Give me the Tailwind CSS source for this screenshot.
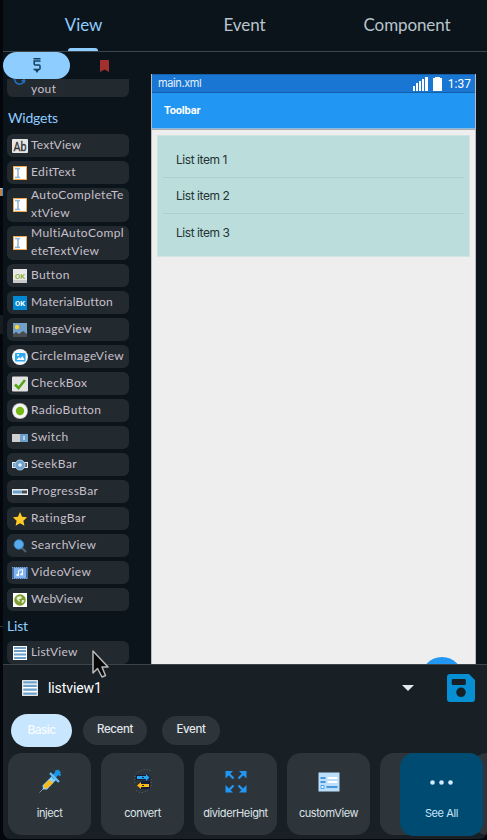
<!DOCTYPE html>
<html lang="en">
<head>
<meta charset="utf-8">
<title>View editor</title>
<script src="https://cdn.jsdelivr.net/npm/@tailwindcss/browser@4"></script>
</head>
<body class="bg-[#03070c] overflow-hidden">
<svg class="hidden">
  <defs>
    <symbol id="edit" viewBox="0 0 16 16"><path fill="#f7a94b" d="M1 1h14v14H1z"/><path fill="#fff" d="M2 2h12v12H2z"/><path fill="none" stroke="#8db4d3" stroke-width="1.500" d="M3 3.500h2l1 1 1-1h1M6 4v8M3 12.500h2l1-1 1 1h1"/></symbol>
    <symbol id="list" viewBox="0 0 16 16"><path fill="#fff" d="M1 1h14v14H1z"/><path fill="#6c9fca" d="M2 2h12v2H2zM2 5h12v2H2zM2 8.500h12v2H2zM2 12h12v2H2z"/></symbol>
  </defs>
</svg>
<main class="relative ml-[3px] w-[484px] h-[839px] flex flex-col bg-[#0c141b] rounded-b-lg overflow-hidden">
  <nav class="h-[52px] shrink-0 border-b border-[#3d464d] grid grid-cols-[161px_161px_162px] text-[17px] text-[#b9c4cd] font-['Lato',sans-serif] [&>div]:pb-[2px]">
    <div class="relative flex items-center justify-center text-[#8ecdff] tracking-[-0.1px]">View<span class="absolute bottom-0 left-[65px] w-[30px] h-[3px] rounded-t-[3px] bg-[#8ecdff]"></span></div>
    <div class="flex items-center justify-center tracking-[-0.1px]">Event</div>
    <div class="flex items-center justify-center tracking-[-0.1px] pl-[2px]">Component</div>
  </nav>
  <section class="h-[612px] shrink-0 flex">
    <aside class="w-[148px] shrink-0 flex flex-col text-[12px] leading-[18px] text-[#c8c0cc] font-['Lato',sans-serif] tracking-[0.4px]">
      <div class="h-[27px] shrink-0 flex">
        <div class="w-[67px] h-[27px] rounded-full bg-[#8ecdff] flex items-center justify-center">
          <svg class="w-[10px] h-[17px]" viewBox="0 0 10 17" fill="none" stroke="#12405e" stroke-width="1.500"><path d="M1.500 1.750h7M1.500 4h7M2.200 4v3q0 1 1 1H7q1 0 1 1v2.500q0 1-1 1H1.500"/><path fill="#12405e" stroke="none" d="M3 13h4l-2 3z"/></svg>
        </div>
        <div class="w-[68px] flex items-center justify-center"><svg class="w-[9px] h-3" viewBox="0 0 9 12"><path fill="#a2302e" d="M0 1q0-1 1-1h7q1 0 1 1v11L4.500 9.500 0 12z"/></svg></div>
      </div>
      <div class="ml-1 w-[122px] h-[18px] shrink-0 rounded-b-md bg-[#22292f] flex items-start pl-[5px] overflow-hidden">
        <svg class="w-[16px] h-[8px]" viewBox="0 0 16 8" fill="none" stroke="#2070c4" stroke-width="1.500"><path d="M2.500 0q1 5 5 5.200 3 0 4.500-2.500M9.500 1.800h4M12 0v4"/></svg>
        <span class="ml-[3px] mt-px">yout</span>
      </div>
      <h2 class="ml-[5px] h-[37px] shrink-0 pt-[12px] text-[14px] leading-[18px] text-[#8ecdff] tracking-[-0.2px]">Widgets</h2>
      <ul class="ml-1 w-[122px] flex flex-col gap-1 shrink-0 [&>li]:h-[23px] [&>li]:rounded-md [&>li]:bg-[#22292f] [&>li]:flex [&>li]:items-center [&>li]:pl-[5px] [&>li]:gap-[3px] [&_svg]:w-4 [&_svg]:h-4 [&_svg]:shrink-0 [&_span]:pb-[2px]">
        <li><svg viewBox="0 0 16 16"><rect y="1" width="16" height="14" rx="1" fill="#e6e6e6"/><text x="8" y="12.500" font-family="Roboto" font-size="12" fill="#333" stroke="#333" stroke-width=".3" text-anchor="middle" textLength="13" lengthAdjust="spacingAndGlyphs" letter-spacing="0">Ab</text></svg><span class="tracking-[0.2px]">TextView</span></li>
        <li><svg><use href="#edit"/></svg><span class="tracking-[0.4px]">EditText</span></li>
        <li class="h-[34px]!"><svg><use href="#edit"/></svg><span class="whitespace-nowrap">AutoCompleteTe<br>xtView</span></li>
        <li class="h-[34px]!"><svg><use href="#edit"/></svg><span class="whitespace-nowrap">MultiAutoCompl<br>eteTextView</span></li>
        <li><svg viewBox="0 0 16 16"><path fill="#e9e9e9" d="M1 1h14v14H1z"/><path fill="#c9c9c9" d="M1 12h14v3H1z"/><text x="8" y="11" font-family="Roboto" font-size="8" font-weight="500" fill="#8cab2c" text-anchor="middle" textLength="10" lengthAdjust="spacingAndGlyphs" letter-spacing="0">OK</text></svg><span>Button</span></li>
        <li><svg viewBox="0 0 16 16"><path fill="#0288d1" d="M1 1h14v14H1z"/><text x="8" y="11" font-family="Roboto" font-size="7.500" font-weight="700" fill="#fff" text-anchor="middle" textLength="10" lengthAdjust="spacingAndGlyphs" letter-spacing="0">OK</text></svg><span class="tracking-[0.15px]">MaterialButton</span></li>
        <li><svg viewBox="0 0 16 16"><path fill="#72a0c8" d="M1 1h14v14H1z"/><circle cx="5" cy="5" r="2.200" fill="#fbd72b"/><path fill="#4a4d50" d="M1 12l3-2 3 2 4-3 4 3v3H1z"/></svg><span>ImageView</span></li>
        <li><svg viewBox="0 0 16 16"><circle cx="8" cy="8" r="8" fill="#f1f5f7"/><rect x="3" y="4" width="10.500" height="8.500" rx="1" fill="#2fa8ef"/><path fill="#fff" d="M4.500 11l2.500-3 1.500 1.500L10.500 7l2 4z"/><circle cx="6" cy="6" r="1" fill="#fff"/></svg><span>CircleImageView</span></li>
        <li><svg viewBox="0 0 16 16"><rect y=".5" width="16" height="15" rx="1" fill="#e4e4e4"/><path fill="none" stroke="#55a51c" stroke-width="2.600" d="M3 8.500l3.500 3.500L13 4"/></svg><span>CheckBox</span></li>
        <li><svg viewBox="0 0 16 16"><circle cx="8" cy="8" r="8" fill="#a9aba8"/><circle cx="8" cy="8" r="7.300" fill="#f6f6f6"/><circle cx="8" cy="8" r="4.200" fill="#76b815"/></svg><span>RadioButton</span></li>
        <li><svg viewBox="0 0 16 16"><path fill="#cfcfcf" d="M0 4h8v8H0z"/><path fill="#6c9fca" d="M8 4h8v8H8z"/><path fill="#b3d2ea" d="M11 6h2v4h-2z"/></svg><span>Switch</span></li>
        <li><svg viewBox="0 0 16 16"><path fill="#e8edf0" d="M0 5h16v6H0z"/><path fill="#6c9fca" d="M1 6h4v4H1z"/><path fill="#555" d="M12 6h3v4h-3z"/><circle cx="8" cy="8" r="5" fill="#6c9fca" stroke="#a9cbe4"/><circle cx="8" cy="8" r="1.800" fill="#e8f2fa"/></svg><span>SeekBar</span></li>
        <li><svg viewBox="0 0 16 16"><path fill="#e8edf0" d="M0 5h16v6H0z"/><path fill="#6c9fca" d="M1 6.500h9v3H1z"/><path fill="#4a4a4a" d="M10 6.500h5v3h-5z"/></svg><span>ProgressBar</span></li>
        <li><svg viewBox="0 0 16 16"><path fill="#ffc928" d="M8 1l2.100 4.700 5 .6-3.700 3.400 1 5L8 12.200l-4.400 2.500 1-5L.9 6.300l5-.6z"/></svg><span>RatingBar</span></li>
        <li><svg viewBox="0 0 16 16"><path stroke="#52616b" stroke-width="2" d="M9.500 9.500l4.500 4.500"/><circle cx="6.800" cy="6.500" r="4.700" fill="#58acee" stroke="#3b89c8"/></svg><span>SearchView</span></li>
        <li><svg viewBox="0 0 16 16"><path fill="#4671a8" d="M0 2h16v12H0z"/><path fill="#83b3ee" d="M2 3h12v10H2z"/><path stroke="#83a7d3" stroke-dasharray="1 1" d="M0 2.500h16M0 13.500h16"/><path fill="none" stroke="#fff" d="M6.500 10V5.500l4-1V9"/><circle cx="5.700" cy="10" r="1.300" fill="#fff"/><circle cx="9.700" cy="9.300" r="1.300" fill="#fff"/></svg><span>VideoView</span></li>
        <li><svg viewBox="0 0 16 16"><path fill="#fff" d="M1 1h14v14H1z"/><circle cx="8" cy="8" r="5.800" fill="#7e9e32"/><path fill="#e4edce" d="M5 5l3-1 2 1-1 2H7l1 2-1 1-2.500-3zM10 8h2.500l-1.500 3H9.500z"/></svg><span class="tracking-[0.2px]">WebView</span></li>
      </ul>
      <h2 class="ml-1 h-[30px] shrink-0 pt-[6px] text-[14px] leading-[18px] text-[#8ecdff] tracking-[-0.2px]">List</h2>
      <div class="ml-1 w-[122px] h-[23px] shrink-0 rounded-md bg-[#22292f] flex items-center pl-[5px] gap-[3px]"><svg class="w-4 h-4"><use href="#list"/></svg><span class="pb-[2px] tracking-[0.2px]">ListView</span></div>
    </aside>
    <div class="mt-[22px] w-[325px] h-[590px] bg-[#eee] border-x border-[#b9bbbd] relative overflow-hidden flex flex-col">
      <div class="-mx-px h-[19px] shrink-0 bg-[#1976d2] border border-[#155fa9] flex items-center pl-[6px] pr-[4px] text-white font-['Roboto',sans-serif]">
        <span class="text-[11px] tracking-[-0.4px] text-[#e3f0fb] font-['Inter',sans-serif]">main.xml</span>
        <svg class="ml-auto w-[15px] h-[14px]" viewBox="0 0 15 14" fill="#fff"><path d="M0 9h2v5H0zM3 6h2v8H3zM6 4h2v10H6zM9 2h2v12H9zM12 0h3v14h-3z"/></svg>
        <svg class="ml-[5px] w-[9px] h-[14px]" viewBox="0 0 9 14" fill="#fff"><path d="M0 1h2V0h5v1h2v13H0z"/></svg>
        <span class="ml-[6px] text-[12px]">1:37</span>
      </div>
      <div class="-mx-px h-[36px] shrink-0 bg-[#2196f3] border-x border-b border-x-[#155fa9] border-b-[#8abde6] flex items-center pl-[12px] pt-[2px] text-white font-bold text-[11px] tracking-[-0.15px] font-['Roboto',sans-serif]">Toolbar</div>
      <div class="h-px shrink-0 bg-[#aaa]"></div>
      <div class="mt-[5px] ml-[5px] w-[313px] h-[122px] shrink-0 bg-[#bbdddc] border border-[#cfe4e3] px-[5px] pt-[5px] text-[12px] text-[#263333] font-['Inter',sans-serif] tracking-[-0.45px] [&>div]:pl-[13px] [&>div]:flex [&>div]:items-center">
        <div class="h-[37px] border-b border-[#aed0cf] pt-px">List item 1</div>
        <div class="h-[36px] border-b border-[#aed0cf] pt-px">List item 2</div>
        <div class="h-[37px]">List item 3</div>
      </div>
      <div class="absolute left-[269px] top-[583px] w-[42px] h-[42px] rounded-full bg-[#2196f3]"></div>
    </div>
  </section>
  <section class="flex-1 border-t border-[#3a444b] bg-[#182026] flex flex-col overflow-hidden">
    <header class="h-[45px] shrink-0 flex items-center pl-[18px]">
      <svg class="w-[18px] h-[18px]"><use href="#list"/></svg>
      <span class="ml-[9px] pt-px text-[14px] text-white font-['Roboto',sans-serif] tracking-[-0.1px]">listview1</span>
      <svg class="ml-auto w-[12px] h-[6px]" viewBox="0 0 12 6"><path fill="#dfe9f2" d="M0 0h12L6 6z"/></svg>
      <svg class="ml-[33px] mr-[12px] w-[28px] h-[28px]" viewBox="0 0 28 28"><path fill="#0690d3" fill-rule="evenodd" d="M3 0h19l6 6v19q0 3-3 3H3q-3 0-3-3V3q0-3 3-3zM6 5q-1.300 0-1.300 1.300v3.400Q4.700 11 6 11h11.500q1.300 0 1.300-1.300V6.300Q18.800 5 17.500 5zM14 13.500a4.800 4.800 0 100 9.600 4.800 4.800 0 000-9.600z"/></svg>
    </header>
    <div class="h-[43px] shrink-0 flex items-center pl-[8px] pb-[3px] text-[11.500px] font-medium text-[#e2e6ea] font-['Inter',sans-serif]">
      <span class="w-[61px] h-[33px] rounded-full bg-[#c9e6ff] text-[#f8fcff] flex items-center justify-center text-[12px] tracking-[-0.6px]">Basic</span>
      <span class="ml-[11px] w-[64px] h-[29px] rounded-full bg-[#2d353b] flex items-center justify-center tracking-[-0.4px]">Recent</span>
      <span class="ml-[15px] w-[58px] h-[29px] rounded-full bg-[#2d353b] flex items-center justify-center tracking-[-0.4px]">Event</span>
    </div>
    <div class="relative h-[83px] shrink-0 flex gap-[10px] pl-[5px] text-[11px] text-[#dde3e8] font-['Inter',sans-serif] tracking-[-0.4px] [&>div]:w-[83px] [&>div]:h-[82px] [&>div]:shrink-0 [&>div]:rounded-[14px] [&>div]:bg-[#2d353b] [&>div]:flex [&>div]:flex-col [&>div]:items-center [&>div]:pt-[16px] [&>div>span]:mt-[12px] [&_svg]:w-6 [&_svg]:h-6">
      <div><svg viewBox="0 0 24 24"><path stroke="#8292a2" d="M1.500 23.500l6-6"/><path fill="#8fd0ef" d="M4.500 16.500L15 6l4 4L9 20.500H5z"/><path fill="#fdb813" d="M6 16l5-5 4 3-6 5-3 .3z"/><path stroke="#2196e8" stroke-width="4" d="M14.500 9l7-7"/><path stroke="#62c3fa" stroke-width="2.200" d="M12 4l9 9"/><path stroke="#1596e8" stroke-width="2.200" d="M17.500 1.500l5 5"/></svg><span>inject</span></div>
      <div><svg viewBox="0 0 24 24"><g fill="none" stroke="#667078" stroke-dasharray="1 2"><path d="M4 14Q1 4 13 .5q4-.5 7 1.500M20 10q3 10-8 13.500-5 0-7-2"/></g><path fill="#151b3b" d="M5 6h11V4.500L19.500 8.500V11H5zM6 16l4-4h9v8h-9v1z"/><path fill="#26a6ed" d="M6 7h9V5l3.500 3.500L15 12v-2H6z"/><path fill="#fdbc12" d="M18 15H10v-2l-4 3.500 4 3.500v-2h8z"/><path fill="#151b3b" d="M11 8h2v1h-2zM11 16h2v1h-2z"/></svg><span>convert</span></div>
      <div><svg viewBox="0 0 24 24"><path fill="none" stroke="#2196f3" stroke-width="2.400" d="M4 4l5.500 5.500M20 4l-5.500 5.500M4 22l5.500-5.500M20 22l-5.500-5.500"/><path fill="#2196f3" d="M1.500 2H9L1.500 9.500zM22.500 2H15l7.500 7.500zM1.500 23.500H9L1.500 16zM22.500 23.500H15l7.500-7.500z"/></svg><span>dividerHeight</span></div>
      <div><svg viewBox="0 0 24 24"><path fill="#bbdefb" d="M1.500 3.500h21v19h-21z"/><path fill="#4995dc" d="M3.500 8h5v2h-5zM3.500 12h5v2h-5zM9.500 17h11v2h-11z"/><path fill="#fff" d="M10.500 8h10v2h-10zM10.500 12h10v2h-10z"/><path fill="#fff" stroke="#42a5f5" d="M4 16.500h3v3H4z"/></svg><span>customView</span></div>
      <div></div>
      <div></div>
      <div class="absolute left-[397px] top-0 h-[83px]! bg-[#004b71]! text-[#c9e6ff]"><svg class="w-[24px]" viewBox="0 0 24 24" fill="#d4ebff"><circle cx="2.500" cy="13.500" r="2.300"/><circle cx="11.500" cy="13.500" r="2.300"/><circle cx="20.500" cy="13.500" r="2.300"/></svg><span>See All</span></div>
    </div>
  </section>
</main>
<svg class="absolute left-[91px] top-[649px] w-[20px] h-[30px]" viewBox="0 0 20 30"><path fill="#080808" stroke="#b9b9b9" stroke-width="1.500" stroke-linejoin="round" d="M2 2v22l4.500-4.500 4.500 8.500 3.500-1.500L11 18h6z"/></svg>
<div class="absolute left-0 top-[188px] w-[3px] h-[8px] border-t border-r border-[#b8c6d4] border-r-[#3f8fd0] bg-[#b9834a]"></div>
<div class="absolute left-0 top-[315px] w-[3px] h-[19px] bg-[#171c21]"></div>
<div class="absolute left-0 top-[626px] w-[3px] h-px bg-[#30363b]"></div>
</body>
</html>
